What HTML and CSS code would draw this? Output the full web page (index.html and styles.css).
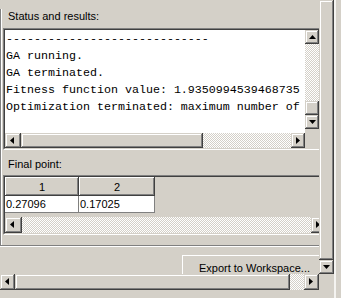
FILE: index.html
```html
<!DOCTYPE html>
<html>
<head>
    <title>Run solver and view results</title>
    <link rel="stylesheet" href="styles.css">
</head>
<body>
<div class="window">
    <div class="view-col">
        <div class="viewport">
            <!-- Results panel (right side scrolled out of view) -->
            <div class="panel">
                <div class="label status-label">Status and results:</div>
                <div class="textbox">
                    <div class="textbox-in">
                        <pre class="results">-----------------------------
GA running.
GA terminated.
Fitness function value: 1.9350994539468735
Optimization terminated: maximum number of</pre>
                        <div class="vscroll">
                            <div class="sbtn up"></div>
                            <div class="track v-track"></div>
                            <div class="thumb v-thumb"></div>
                            <div class="sbtn down"></div>
                        </div>
                        <div class="hscroll">
                            <div class="sbtn left"></div>
                            <div class="thumb h-thumb"></div>
                            <div class="track"></div>
                            <div class="sbtn right"></div>
                        </div>
                        <div class="corner"></div>
                    </div>
                </div>

                <div class="label final-label">Final point:</div>
                <div class="table-pane">
                    <div class="table-pane-in">
                        <table class="point-table">
                            <colgroup>
                                <col class="col-1">
                                <col class="col-2">
                            </colgroup>
                            <tr>
                                <th>1</th>
                                <th>2</th>
                            </tr>
                            <tr>
                                <td>0.27096</td>
                                <td>0.17025</td>
                            </tr>
                        </table>
                        <div class="hscroll table-scroll">
                            <div class="sbtn left wide"></div>
                            <div class="track"></div>
                            <div class="sbtn right"></div>
                        </div>
                    </div>
                </div>
            </div>
            <button class="export">Export to Workspace...</button>
        </div>
        <!-- outer scroll pane, horizontal bar -->
        <div class="hscroll outer-h">
            <div class="sbtn left"></div>
            <div class="thumb outer-h-thumb"></div>
            <div class="track"></div>
            <div class="sbtn right"></div>
        </div>
    </div>
    <!-- outer scroll pane, vertical bar -->
    <div class="outer-v">
        <div class="thumb outer-v-thumb"></div>
        <div class="sbtn down"></div>
    </div>
    <div class="frame"></div>
</div>
</body>
</html>
```

FILE: styles.css
```css
* {
    box-sizing: border-box;
}
body {
    margin: 0;
    background-color: #d4d0c8; /* classic window grey */
    font-family: "Liberation Sans", Arial, sans-serif;
    font-size: 11px;
    color: #000;
    overflow: hidden;
}
.window {
    display: flex;
    width: 341px;
    height: 298px;
}
.view-col {
    width: 319px;
    display: flex;
    flex-direction: column;
}
.viewport {
    height: 274px;
    overflow: hidden;
}

/* --- Panel --- */
.panel {
    width: 330px;
    height: 237px;
    border-left: 1px solid #808080;
    border-bottom: 1px solid #808080;
    box-shadow: inset 1px 0 #fff, 0 1px #fff; /* etched look */
}
.label {
    line-height: 14px;
    padding-left: 7px;
}
.status-label {
    margin-top: 9px;
}
.final-label {
    margin-top: 7px;
}

/* sunken border, drawn as two nested boxes */
.textbox, .table-pane {
    margin-left: 2px;
    border: 1px solid;
    border-color: #808080 #fff #fff #808080;
}
.textbox-in, .table-pane-in {
    height: 100%;
    border: 1px solid;
    border-color: #404040 #d4d0c8 #d4d0c8 #404040;
}
.textbox {
    margin-top: 5px;
    width: 318px;
    height: 122px;
}
.textbox-in {
    display: grid;
    grid-template-columns: 300px 14px;
    grid-template-rows: 103px 15px;
}
.results {
    margin: 0;
    padding: 1px 0 0 1px;
    background-color: #fff;
    font-family: "Liberation Mono", "Courier New", monospace;
    font-size: 11.67px;
    line-height: 17px;
    white-space: pre;
    overflow: hidden;
}

/* --- Scrollbars --- */
.vscroll {
    display: flex;
    flex-direction: column;
}
.hscroll {
    display: flex;
}
.track {
    flex: 1;
    background: repeating-conic-gradient(#fff 0 25%, #d4d0c8 0 50%) 0 0 / 2px 2px;
}
.v-track {
    flex: none;
    height: 57px;
}
.sbtn, .thumb {
    flex: none;
    position: relative;
    background-color: #d4d0c8;
    box-shadow: inset -1px -1px #404040, inset 1px 1px #d4d0c8, inset -2px -2px #808080, inset 2px 2px #fff;
}
.vscroll .sbtn, .v-thumb {
    height: 14px;
}
.hscroll .sbtn {
    width: 14px;
}
.sbtn.wide {
    width: 17px;
}
.sbtn::after {
    content: "";
    position: absolute;
    background: #000;
}
.up::after, .down::after {
    left: 4px;
    width: 7px;
    height: 4px;
}
.up::after {
    top: 5px;
    clip-path: polygon(50% 0, 100% 100%, 0 100%);
}
.down::after {
    top: 5px;
    clip-path: polygon(0 0, 100% 0, 50% 100%);
}
.left::after, .right::after {
    top: 4px;
    width: 4px;
    height: 7px;
}
.left::after {
    left: 5px;
    clip-path: polygon(100% 0, 100% 100%, 0 50%);
}
.right::after {
    left: 5px;
    clip-path: polygon(0 0, 100% 50%, 0 100%);
}
.textbox .hscroll .left {
    width: 16px;
}
.h-thumb {
    width: 182px;
}
.corner {
    background-color: #d4d0c8;
}

/* --- Final point table --- */
.table-pane {
    margin-top: 4px;
    width: 324px;
    height: 60px;
}
.table-pane-in {
    display: flex;
    flex-direction: column;
}
.point-table {
    border-spacing: 0;
    table-layout: fixed;
    width: 150px;
}
.col-1 {
    width: 74px;
}
.col-2 {
    width: 76px;
}
.point-table th {
    height: 19px;
    padding: 0;
    font-weight: normal;
    background-color: #d4d0c8;
    box-shadow: inset -1px -1px #404040, inset 1px 1px #fff, inset -2px -2px #808080;
}
.point-table td {
    height: 17px;
    padding: 0 0 0 1px;
    background-color: #fff;
    border-right: 1px solid #808080;
    border-bottom: 1px solid #808080;
}
.table-scroll {
    margin-top: 4px;
    height: 16px;
}

/* --- Export button --- */
.export {
    display: block;
    margin: 9px 0 0 182px;
    width: 145px;
    height: 25px;
    padding: 0;
    font-family: inherit;
    font-size: 11px;
    color: #000;
    background-color: #d4d0c8;
    border: 1px solid;
    border-color: #fff #404040 #404040 #fff;
    box-shadow: inset -1px -1px #808080;
}

/* --- Outer scroll pane bars --- */
.outer-h {
    height: 16px;
}
.outer-h .sbtn {
    width: 15px;
}
.outer-h-thumb {
    width: 275px;
}
.outer-v {
    width: 15px;
    display: flex;
    flex-direction: column;
}
.outer-v-thumb {
    height: 260px;
}
.outer-v .sbtn {
    height: 14px;
}
.outer-v .down::after {
    left: 4px;
}
.frame {
    flex: 1;
    border-left: 2px solid #f4f3f0;
}
```
